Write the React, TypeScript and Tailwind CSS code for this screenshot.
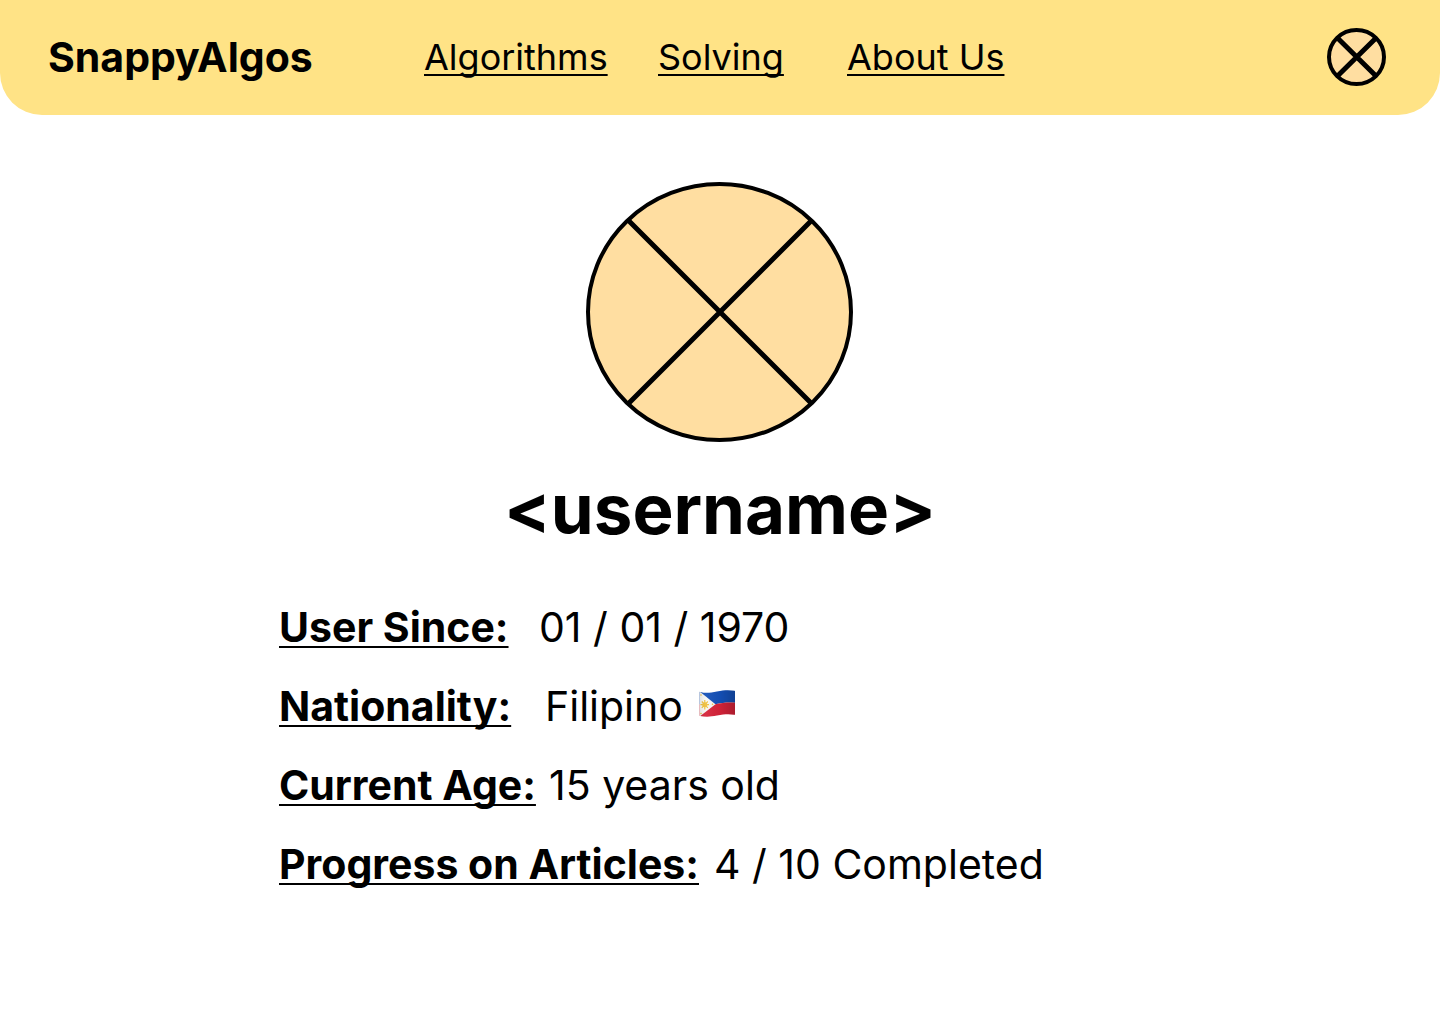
import type { ReactNode } from "react";

function AvatarPlaceholder() {
  return (
    <svg viewBox="0 0 268 260" className="h-[260px] w-[268px]" role="img" aria-label="Profile picture">
      <ellipse cx="133.5" cy="130" rx="131.5" ry="128" fill="#FFDEA1" stroke="#000" strokeWidth="4" />
      <path d="M42.500 38.500 L225.500 221.500 M225.500 38.500 L42.500 221.500" stroke="#000" strokeWidth="5" />
    </svg>
  );
}

function SmallAvatar() {
  return (
    <svg viewBox="0 0 59 58" className="h-[58px] w-[59px]" aria-hidden="true">
      <ellipse cx="29.5" cy="29" rx="27.5" ry="27" fill="#FFDEA1" stroke="#000" strokeWidth="4" />
      <path d="M10.500 10 L49 48 M49 10 L10.500 48" stroke="#000" strokeWidth="5" />
    </svg>
  );
}

function PhilippineFlag() {
  return (
    <svg viewBox="0 0 36 27" className="mb-1.5 h-[27px] w-9" role="img" aria-label="Flag of the Philippines">
      <defs>
        <clipPath id="flag-shape">
          <path d="M0.500 2.300 Q0.500 1.700 1.200 1.900 C6 3.200 11 3 18 1.500 C25 0 30 -0.200 35.500 0.800 Q36 1 36 1.600 V24.300 Q36 25 35.300 24.800 C30 23.800 25 24.200 18 25.600 C11 27 6 27 1.200 26 Q0.500 25.800 0.500 25.200 Z" />
        </clipPath>
        <linearGradient id="flag-shade" x1="0" x2="1" y1="0" y2="0">
          <stop offset="0" stopColor="#000" stopOpacity="0.1" />
          <stop offset="0.2" stopColor="#fff" stopOpacity="0.06" />
          <stop offset="0.6" stopColor="#000" stopOpacity="0.04" />
          <stop offset="1" stopColor="#000" stopOpacity="0.2" />
        </linearGradient>
      </defs>
      <g clipPath="url(#flag-shape)">
        <path d="M0 0 H36 V12.700 C30 12 24 12.500 16 14.300 H0 Z" fill="#1450B8" />
        <path d="M0 14.300 H16 C24 12.500 30 12 36 12.700 V27 H0 Z" fill="#D62339" />
        <path d="M0 1 L16.500 14.200 L0 27 Z" fill="#F7F7F5" />
        <path d="M5.800 10 V19.400 M1.500 14.700 H10 M2.800 11.500 L8.800 17.900 M8.800 11.500 L2.800 17.900" stroke="#F0C03C" strokeWidth="1.2" />
        <circle cx="5.8" cy="14.7" r="2.500" fill="#F0C03C" />
        <circle cx="2" cy="5" r="0.800" fill="#F0C03C" />
        <circle cx="2" cy="23.500" r="0.800" fill="#F0C03C" />
        <circle cx="13.500" cy="14.300" r="0.800" fill="#F0C03C" />
        <rect width="36" height="27" fill="url(#flag-shade)" />
      </g>
    </svg>
  );
}

const linkStyle =
  "underline decoration-2 underline-offset-4 [text-decoration-skip-ink:none]";

function Detail({ label, width, children }: { label: string; width: string; children: ReactNode }) {
  return (
    <div className="flex">
      <dt className={`shrink-0 font-bold ${width}`}>
        <span className={linkStyle}>{label}</span>
      </dt>
      <dd className="flex items-center gap-4 whitespace-nowrap">{children}</dd>
    </div>
  );
}

export default function App() {
  return (
    <div className="min-h-screen bg-white font-['Inter',sans-serif] text-black">
      <header className="flex items-start rounded-b-[42px] bg-[#FFE386] py-7 pr-[54px] pl-12">
        <a href="#home" className="w-[376px] shrink-0 text-[41px] leading-[59px] font-bold">
          SnappyAlgos
        </a>
        <nav className="flex flex-1 text-[36px] leading-[59px]">
          <div className="w-[234px]">
            <a href="#algorithms" className={linkStyle}>Algorithms</a>
          </div>
          <div className="w-[189px]">
            <a href="#solving" className={linkStyle}>Solving</a>
          </div>
          <a href="#about" className={`whitespace-nowrap ${linkStyle}`}>About Us</a>
        </nav>
        <button type="button" aria-label="Account">
          <SmallAvatar />
        </button>
      </header>
      <main className="flex flex-col items-center pt-[67px]">
        <AvatarPlaceholder />
        <h1 className="mt-[22px] text-[69px] leading-[90px] font-bold">&lt;username&gt;</h1>
        <dl className="mt-12 flex w-full max-w-[882px] flex-col gap-[29px] text-[41px] leading-[50px]">
          <Detail label="User Since:" width="w-[260px]">01 / 01 / 1970</Detail>
          <Detail label="Nationality:" width="w-[266px]">
            Filipino <PhilippineFlag />
          </Detail>
          <Detail label="Current Age:" width="w-[270px]">15 years old</Detail>
          <Detail label="Progress on Articles:" width="w-[435px]">4 / 10 Completed</Detail>
        </dl>
      </main>
    </div>
  );
}
